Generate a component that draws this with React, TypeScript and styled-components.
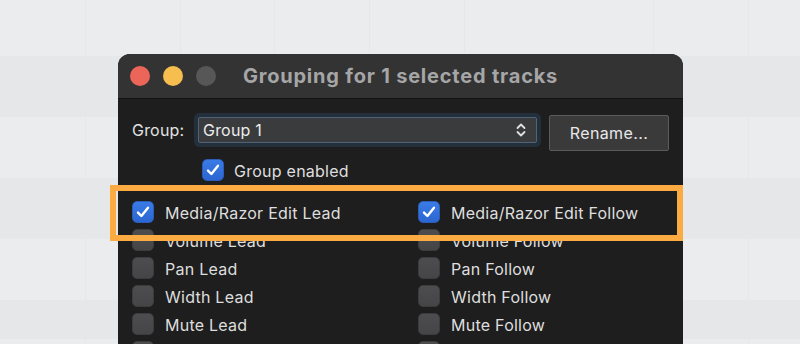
import React from "react";
import styled, { createGlobalStyle } from "styled-components";

const Global = createGlobalStyle`
  html, body { margin: 0; padding: 0; }
  body {
    width: 800px;
    height: 344px;
    overflow: hidden;
    font-family: Inter, "Liberation Sans", sans-serif;
    background-color: #ebecee;
    background-image:
      repeating-linear-gradient(to right, transparent 0 85px, #e6e7e9 85px 86px, transparent 86px 94.7px),
      repeating-linear-gradient(to bottom, #ebecee 0 61px, #e6e7e9 61px 122px);
    background-position: 0 0, 0 -5px;
  }
`;

const Page = styled.div`
  height: 344px;
  overflow: hidden;
  padding: 54px 0 0 118px;
  box-sizing: border-box;
`;

const Window = styled.div`
  position: relative;
  width: 565px;
  height: 320px;
  border-radius: 12px 12px 0 0;
  background: #1e1e1f;
`;

const TitleBar = styled.div`
  height: 45px;
  display: grid;
  grid-template-columns: 1fr auto 1fr;
  align-items: center;
  background: #333334;
  border-radius: 12px 12px 0 0;
  border-bottom: 1px solid #121212;
  box-sizing: border-box;
  padding: 0 12px;
`;

const Lights = styled.div`
  display: flex;
  gap: 13px;
  align-items: center;
`;

const Light = styled.span<{ $color: string }>`
  width: 20px;
  height: 20px;
  border-radius: 50%;
  background: ${(p) => p.$color};
`;

const Title = styled.div`
  color: #a6a6a6;
  font-weight: 700;
  font-size: 20px;
  letter-spacing: 0.8px;
  margin-top: -1px;
`;

const Body = styled.div`
  padding: 16px 0 0 14px;
`;

const GroupRow = styled.div`
  display: flex;
  align-items: center;
  height: 36px;
`;

const FieldLabel = styled.span`
  color: #e2e2e2;
  font-size: 16px;
  letter-spacing: 0.2px;
  width: 66px;
  margin-bottom: 6px;
`;

const Select = styled.div`
  width: 339px;
  height: 26px;
  box-sizing: border-box;
  margin-bottom: 6px;
  border: 1.5px solid #50637a;
  box-shadow: 0 0 0 4px #23303c;
  border-radius: 2px;
  background: #3a3b3d;
  display: flex;
  align-items: center;
  justify-content: space-between;
  padding: 0 10px 0 4px;
  color: #ececec;
  font-size: 16px;
  letter-spacing: 0.2px;
`;

const RenameButton = styled.button`
  margin-left: 12px;
  width: 120px;
  height: 36px;
  background: #3a3a3b;
  border: 1.5px solid #5b5b5c;
  border-radius: 2px;
  color: #e8e8e8;
  font-family: inherit;
  font-size: 16px;
  letter-spacing: 0.4px;
  padding: 0;
`;

const EnabledRow = styled.div`
  display: flex;
  align-items: center;
  gap: 10px;
  margin: 8px 0 0 70px;
  height: 22px;
`;

const Grid = styled.div`
  display: grid;
  grid-template-columns: 286px 1fr;
  grid-auto-rows: 28px;
  margin-top: 17px;
`;

const Option = styled.label`
  display: flex;
  align-items: center;
  gap: 11px;
`;

const Label = styled.span`
  color: #dedede;
  font-size: 16px;
  letter-spacing: 0.25px;
  margin-top: 1px;
`;

const Box = styled.span<{ $checked: boolean }>`
  width: 22px;
  height: 22px;
  box-sizing: border-box;
  border-radius: 5px;
  display: flex;
  align-items: center;
  justify-content: center;
  flex: none;
  background: ${(p) =>
    p.$checked ? "linear-gradient(#3a7be6, #2c66d2)" : "linear-gradient(#4d4d4f, #454547)"};
  border: 1px solid ${(p) => (p.$checked ? "#2a5cb8" : "#3c3c3e")};
`;

const Highlight = styled.div`
  position: absolute;
  left: -8px;
  top: 131px;
  width: 573px;
  height: 56px;
  box-sizing: border-box;
  border: 6.5px solid #fbab42;
  pointer-events: none;
`;

const Check = ({ checked }: { checked: boolean }) => (
  <Box $checked={checked}>
    {checked && (
      <svg width="16" height="16" viewBox="0 0 16 16">
        <path d="M3 8.6 L6.4 12 L13 3.8" fill="none" stroke="#fff" strokeWidth="2.4" strokeLinecap="round" strokeLinejoin="round" />
      </svg>
    )}
  </Box>
);

const rows: [string, string, boolean][] = [
  ["Media/Razor Edit Lead", "Media/Razor Edit Follow", true],
  ["Volume Lead", "Volume Follow", false],
  ["Pan Lead", "Pan Follow", false],
  ["Width Lead", "Width Follow", false],
  ["Mute Lead", "Mute Follow", false],
  ["", "", false],
];

export default function App() {
  return (
    <>
      <Global />
      <Page>
        <Window>
          <TitleBar>
            <Lights>
              <Light $color="#ec6559" />
              <Light $color="#f5be4f" />
              <Light $color="#575757" />
            </Lights>
            <Title>Grouping for 1 selected tracks</Title>
            <span />
          </TitleBar>
          <Body>
            <GroupRow>
              <FieldLabel>Group:</FieldLabel>
              <Select>
                <span>Group 1</span>
                <svg width="10" height="16" viewBox="0 0 10 16">
                  <path d="M1.5 6 L5 2.5 L8.5 6 M1.5 10 L5 13.5 L8.5 10" fill="none" stroke="#e0e0e0" strokeWidth="1.8" strokeLinecap="round" strokeLinejoin="round" />
                </svg>
              </Select>
              <RenameButton>Rename...</RenameButton>
            </GroupRow>
            <EnabledRow>
              <Check checked />
              <Label>Group enabled</Label>
            </EnabledRow>
            <Grid>
              {rows.map(([a, b, c], i) => (
                <React.Fragment key={i}>
                  <Option>
                    <Check checked={c} />
                    {a && <Label>{a}</Label>}
                  </Option>
                  <Option>
                    <Check checked={c} />
                    {b && <Label>{b}</Label>}
                  </Option>
                </React.Fragment>
              ))}
            </Grid>
          </Body>
          <Highlight />
        </Window>
      </Page>
    </>
  );
}
